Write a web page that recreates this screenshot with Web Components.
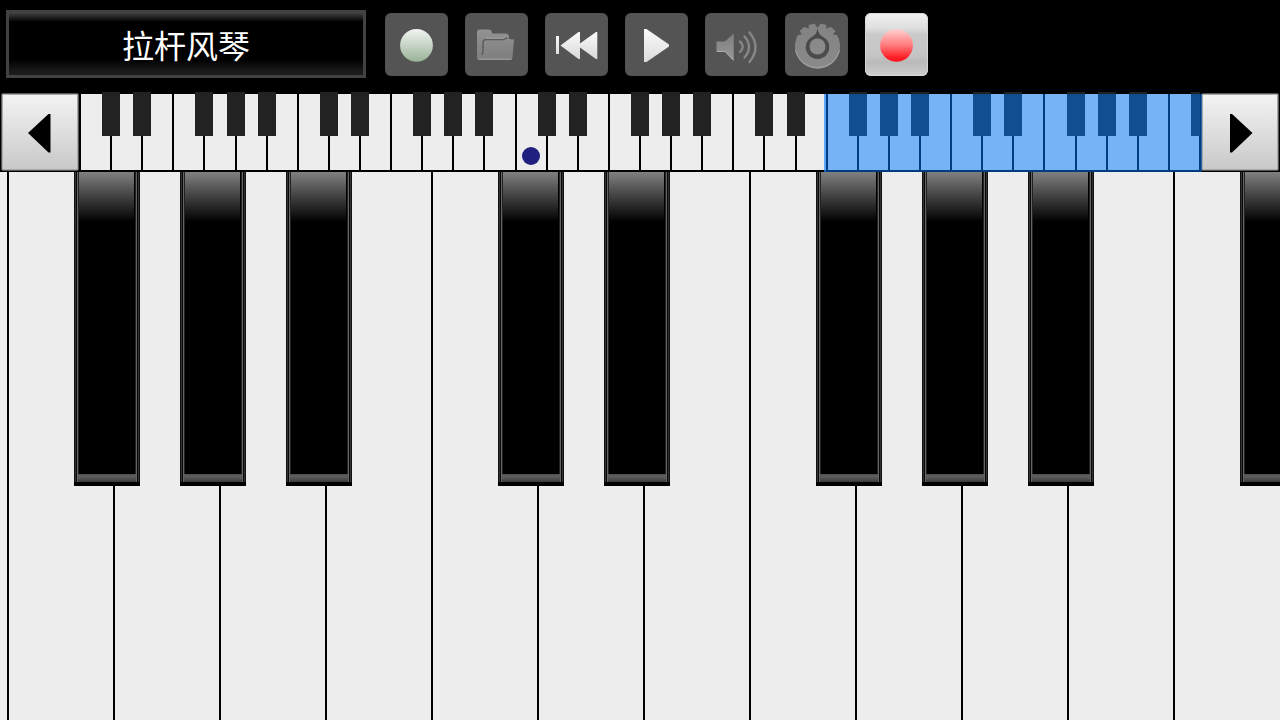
<!DOCTYPE html>
<html lang="zh-CN">
<head>
<meta charset="utf-8">
<title>Piano</title>
<style>
  html, body { height: 100%; margin: 0; background: #000; }
  body { font-family: "Noto Sans CJK SC", "Noto Sans", sans-serif; overflow: hidden; }
</style>
</head>
<body>
<piano-app></piano-app>

<template id="icons">
  <svg data-icon="keys" viewBox="0 0 63 63">
    <defs><linearGradient id="g" x2="0" y2="1"><stop stop-color="#f3f5f3"/><stop offset="1" stop-color="#98b298"/></linearGradient></defs>
    <circle cx="31.5" cy="32.3" r="16.4" fill="url(#g)"/>
  </svg>
  <svg data-icon="folder" viewBox="0 0 63 63">
    <defs><linearGradient id="g" x2="0" y2="1"><stop stop-color="#929292"/><stop offset="1" stop-color="#7e7e7e"/></linearGradient></defs>
    <path d="M12 19q0-2.500 2.500-2.500h9q2.500 0 3 1.500l1 2.500h13.500q2.500 0 3 2.500v3l5 .5-1.500 18q-.2 2.500-2.500 2.500H14.500q-2.500 0-2.500-2.500z" fill="url(#g)"/>
    <path d="M16.500 41.500q1.500-.5 1.500-3V30q0-3.500 3.500-3.500h17l4-2" fill="none" stroke="#5c5c5c" stroke-width="1.500"/>
    <path d="M21 25.200h17l4-1.800M13.500 46.200h33" fill="none" stroke="#a2a2a2"/>
  </svg>
  <svg data-icon="rewind" viewBox="0 0 63 63">
    <defs><linearGradient id="g" x2="0" y2="1"><stop stop-color="#fafafa"/><stop offset="1" stop-color="#d8d8d8"/></linearGradient></defs>
    <path d="M11 23h3v18h-3zM15.500 32.500L33.500 19H35v11.500L51 19h1.300v27H51L35 34.500V46h-1.500z" fill="url(#g)"/>
  </svg>
  <svg data-icon="play" viewBox="0 0 63 63">
    <defs><linearGradient id="g" x2="0" y2="1"><stop stop-color="#fafafa"/><stop offset="1" stop-color="#dcdcdc"/></linearGradient></defs>
    <path d="M19 16h2.500L44 31.500v2L21.500 49H19z" fill="url(#g)"/>
  </svg>
  <svg data-icon="speaker" viewBox="0 0 63 63">
    <defs><linearGradient id="g" x2="0" y2="1"><stop stop-color="#7e7e7e"/><stop offset="1" stop-color="#999"/></linearGradient></defs>
    <path d="M11.500 28.500H20l8.700-8V48L20 39h-8.500z" fill="url(#g)"/>
    <path d="M12 38.500h8.500l7.700 8.500" fill="none" stroke="#aaa"/>
    <g fill="none" stroke="#868686" stroke-width="2.400" stroke-linecap="round">
      <path d="M35 28.500Q40.500 33.500 35 39"/><path d="M39.500 23.500Q48.500 34 39.500 44.500"/><path d="M44.500 19.500Q56.500 34 44.500 49"/>
    </g>
  </svg>
  <svg data-icon="gear" viewBox="0 0 63 63">
    <defs><linearGradient id="g" x2="0" y2="1"><stop stop-color="#828282"/><stop offset="1" stop-color="#8a8a8a"/></linearGradient></defs>
    <path d="M32.500 15L29.500 10.500 23.500 12 24 15.500 19 14 14.500 18 17 21.500 13 22A22.500 22.500 0 1 0 52 22L48 21.500 50.500 18 46 14 41 15.500 41.500 12 35.500 10.500z" fill="url(#g)"/>
    <path d="M10.500 37A22.500 22.500 0 0 0 54.500 37" fill="none" stroke="#a6a6a6"/>
    <path d="M32.500 15.500Q33.500 21.500 37.500 23.500A11.800 11.800 0 1 1 27.500 23.500Q31.500 21.500 32.500 15.500z" fill="#4b4b4b"/>
    <circle cx="32.500" cy="33.500" r="8" fill="#8a8a8a"/>
  </svg>
  <svg data-icon="record" viewBox="0 0 63 63">
    <defs><linearGradient id="g" x2="0" y2="1"><stop stop-color="#ffd2d2"/><stop offset=".5" stop-color="#ff7a7c"/><stop offset=".9" stop-color="#ff1820"/></linearGradient></defs>
    <circle cx="31.500" cy="32.300" r="16.400" fill="url(#g)"/>
  </svg>
</template>

<script>
const iconSet = document.getElementById('icons').content;

class ToolButton extends HTMLElement {
  connectedCallback() {
    const root = this.attachShadow({ mode: 'open' });
    root.innerHTML = `<style>
      :host { display: block; width: 63px; height: 63px; }
      button { display: block; width: 100%; height: 100%; padding: 0; border: 0; border-radius: 6px;
        background: #545454; box-shadow: inset 0 0 1px 0 #404040; }
      :host([active]) button { background: linear-gradient(#f2f2f2, #dedede 24%, #cacaca 34%, #c6c6c6 65%, #bababa 78%, #cecece);
        box-shadow: inset 0 0 1px 1px #d8d8d8; }
      svg { display: block; width: 100%; height: 100%; }
    </style><button type="button" aria-label="${this.getAttribute('label')}"></button>`;
    root.querySelector('button').append(
      iconSet.querySelector(`[data-icon="${this.getAttribute('icon')}"]`).cloneNode(true));
  }
}
customElements.define('tool-button', ToolButton);

class InstrumentPicker extends HTMLElement {
  connectedCallback() {
    this.attachShadow({ mode: 'open' }).innerHTML = `<style>
      :host { display: block; width: 360px; height: 68px; }
      button { display: block; box-sizing: border-box; width: 100%; height: 100%; padding: 0; margin: 0;
        border: 3px solid #424242; color: #fff; font: inherit; font-size: 32px; line-height: 60px;
        background: linear-gradient(#404040, #2a2a2a 3px, #000 9px, #000 46px, #1a1a1a 58px, #1c1c1c); }
    </style><button type="button"><slot></slot></button>`;
  }
}
customElements.define('instrument-picker', InstrumentPicker);

class ScrollButton extends HTMLElement {
  connectedCallback() {
    const left = this.getAttribute('direction') === 'left';
    this.attachShadow({ mode: 'open' }).innerHTML = `<style>
      :host { display: block; flex: none; width: 78px; height: 78px; }
      button { display: block; box-sizing: border-box; width: 100%; height: 100%; padding: 0;
        border: 1px solid #555; border-radius: 2px; background: linear-gradient(#f4f4f4, #c8c8c8);
        box-shadow: inset 0 0 0 1px #aaa; }
      svg { display: block; width: 100%; height: 100%; }
    </style><button type="button" aria-label="${left ? '向左' : '向右'}">
      <svg viewBox="0 0 76 76"><path d="${left ? 'M26 39L46.500 20H48.500V58.500H46.500z' : 'M50.500 39L30 20H28V58.500H30z'}"/></svg>
    </button>`;
  }
}
customElements.define('scroll-button', ScrollButton);

class KeyboardOverview extends HTMLElement {
  connectedCallback() {
    let keys = '';
    for (let i = 1; i <= 36; i++) {
      const sharp = [1, 2, 4, 5, 6].includes(i % 7);
      keys += `<div class="key">${sharp ? '<i class="sharp"></i>' : ''}${i === 15 ? '<i class="dot"></i>' : ''}</div>`;
    }
    this.attachShadow({ mode: 'open' }).innerHTML = `<style>
      :host { display: block; flex: 1; position: relative; height: 80px; }
      .keys { display: flex; box-sizing: border-box; height: 80px; padding: 2px 0; overflow: clip; }
      .key { flex: 1; position: relative; background: #ededed; }
      .key::after { content: ""; position: absolute; top: 0; bottom: 0; right: -1px; width: 2px; background: #000; z-index: 1; }
      .key:first-child { box-shadow: inset 1px 0 #000; }
      .sharp { position: absolute; top: -2px; right: -9px; width: 18px; height: 44px; background: #222; z-index: 2; }
      .dot { position: absolute; bottom: 5px; left: calc(50% - 9px); width: 18px; height: 18px; border-radius: 50%; background: #202080; }
      .view { position: absolute; top: 2px; bottom: 0; left: calc(100% / 36 * 23.92); right: -2px;
        box-sizing: border-box; border-left: 2px solid rgb(60 150 255 / .4); background: rgb(0 119 255 / .5); z-index: 3; }
    </style><div class="keys">${keys}</div><div class="view"></div>`;
  }
}
customElements.define('keyboard-overview', KeyboardOverview);

class PianoKeyboard extends HTMLElement {
  connectedCallback() {
    const sharps = [1, 2, 3, 5, 6, 8, 9, 10, 12];
    let keys = '';
    for (let i = 0; i <= 12; i++) {
      keys += `<div class="key"><button type="button" class="white" aria-label="白键 ${i + 1}"></button>${
        sharps.includes(i) ? `<button type="button" class="black" aria-label="黑键 ${i + 1}"></button>` : ''}</div>`;
    }
    this.attachShadow({ mode: 'open' }).innerHTML = `<style>
      :host { display: flex; flex: 1; min-height: 0; overflow: hidden; background: #ededed; }
      .keys { display: flex; flex: none; margin-left: -97px; }
      .key { flex: none; position: relative; width: 106px; }
      button { display: block; border: 0; padding: 0; }
      .white { box-sizing: border-box; width: 100%; height: 100%; border-right: 2px solid #000; background: #ededed; }
      .key:last-child .white { border-right-color: #ededed; }
      .black { position: absolute; z-index: 1; top: 0; right: -25px; width: 66px; height: 314px; overflow: hidden;
        background:
          linear-gradient(#4c4c4c, #606060 2px, #3c3c3c) 4px 302px / 58px 8px no-repeat,
          linear-gradient(#808080, #000) 5px 0 / 55px 50px no-repeat,
          linear-gradient(90deg, #111 1px, #333 1px 2px, #080808 2px 3px, #666 3px 4px, #222 4px 5px, #000 5px 61px, #222 61px 62px, #666 62px 63px, #080808 63px 64px, #333 64px 65px, #111 65px) 0 0 / 66px 310px no-repeat,
          #000; }
    </style><div class="keys">${keys}</div>`;
  }
}
customElements.define('piano-keyboard', PianoKeyboard);

class PianoApp extends HTMLElement {
  connectedCallback() {
    this.attachShadow({ mode: 'open' }).innerHTML = `<style>
      :host { display: flex; flex-direction: column; height: 100vh; background: #000; }
      header { display: flex; align-items: flex-start; gap: 19px; padding: 10px 6px 14px; }
      nav { display: flex; gap: 17px; padding-top: 3px; }
      .overview { display: flex; align-items: center; height: 80px; padding: 0 1px; }
      keyboard-overview { margin: 0 1px; }
    </style>
    <header>
      <instrument-picker>拉杆风琴</instrument-picker>
      <nav>
        <tool-button icon="keys" label="标记"></tool-button>
        <tool-button icon="folder" label="打开"></tool-button>
        <tool-button icon="rewind" label="后退"></tool-button>
        <tool-button icon="play" label="播放"></tool-button>
        <tool-button icon="speaker" label="音量"></tool-button>
        <tool-button icon="gear" label="设置"></tool-button>
        <tool-button icon="record" label="录音" active></tool-button>
      </nav>
    </header>
    <div class="overview">
      <scroll-button direction="left"></scroll-button>
      <keyboard-overview></keyboard-overview>
      <scroll-button direction="right"></scroll-button>
    </div>
    <piano-keyboard></piano-keyboard>`;
  }
}
customElements.define('piano-app', PianoApp);
</script>
</body>
</html>
